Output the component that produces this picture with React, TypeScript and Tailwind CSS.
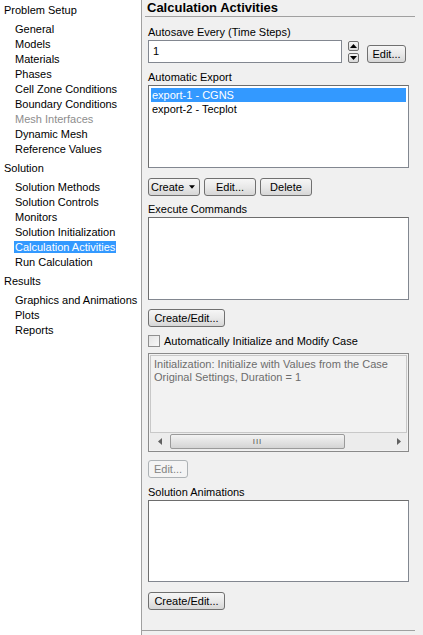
import React from 'react';

type TreeItem = { label: string; disabled?: boolean; selected?: boolean };
type TreeSection = { title: string; items: TreeItem[] };

const tree: TreeSection[] = [
  {
    title: 'Problem Setup',
    items: [
      { label: 'General' },
      { label: 'Models' },
      { label: 'Materials' },
      { label: 'Phases' },
      { label: 'Cell Zone Conditions' },
      { label: 'Boundary Conditions' },
      { label: 'Mesh Interfaces', disabled: true },
      { label: 'Dynamic Mesh' },
      { label: 'Reference Values' },
    ],
  },
  {
    title: 'Solution',
    items: [
      { label: 'Solution Methods' },
      { label: 'Solution Controls' },
      { label: 'Monitors' },
      { label: 'Solution Initialization' },
      { label: 'Calculation Activities', selected: true },
      { label: 'Run Calculation' },
    ],
  },
  {
    title: 'Results',
    items: [{ label: 'Graphics and Animations' }, { label: 'Plots' }, { label: 'Reports' }],
  },
];

function WinButton({
  children,
  disabled,
  className = '',
}: {
  children: React.ReactNode;
  disabled?: boolean;
  className?: string;
}) {
  return (
    <button
      type="button"
      className={`h-[18px] px-[4px] rounded-[3px] border text-[11px] leading-[14px] flex items-center justify-center ${
        disabled
          ? 'border-[#adb2b5] bg-[#f4f4f4] text-[#838383]'
          : 'border-[#707070] bg-gradient-to-b from-[#f6f6f6] via-[#e9e9e9] to-[#d6d6d6] text-black'
      } ${className}`}
    >
      {children}
    </button>
  );
}

function SpinButton({ up }: { up?: boolean }) {
  return (
    <div className="w-[11px] h-[10px] rounded-[2px] border border-[#707070] bg-gradient-to-b from-[#f4f4f4] to-[#d9d9d9] flex items-center justify-center">
      <svg width="7" height="4" viewBox="0 0 7 4">
        {up ? <path d="M0 4 L3.5 0 L7 4 Z" fill="#000" /> : <path d="M0 0 L3.5 4 L7 0 Z" fill="#000" />}
      </svg>
    </div>
  );
}

export default function App() {
  return (
    <div className="w-[423px] h-[635px] flex overflow-hidden font-['Liberation_Sans',Arial,sans-serif] text-[11px] text-black">
      {/* Navigation tree */}
      <div className="w-[142px] shrink-0 bg-white border-r border-[#a0a0a0] pt-[3px]">
        {tree.map((section, i) => (
          <div key={section.title} className={i > 0 ? 'mt-[4px]' : ''}>
            <div className="h-[15px] leading-[15px] pl-[4px]">{section.title}</div>
            <div className="mt-[4px]">
              {section.items.map((item) => (
                <div key={item.label} className="h-[15px] leading-[15px] pl-[14px]">
                  <span
                    className={`px-[1px] ${
                      item.selected ? 'bg-[#3399ff] text-white' : item.disabled ? 'text-[#8d8d8d]' : ''
                    }`}
                  >
                    {item.label}
                  </span>
                </div>
              ))}
            </div>
          </div>
        ))}
      </div>

      {/* Task page */}
      <div className="flex-1 bg-[#f0f0f0] flex flex-col">
        <div className="h-[17px] ml-[3px] w-[270px] border-b border-[#a0a0a0]">
          <div className="pl-[2px] text-[13px] font-bold leading-[15px]">Calculation Activities</div>
        </div>

        <div className="pl-[6px] flex flex-col">
          <div className="mt-[8px] h-[14px] leading-[14px]">Autosave Every (Time Steps)</div>
          <div className="mt-[1px] flex items-start">
            <div className="w-[194px] h-[23px] bg-white border border-[#828790] pl-[4px] pt-[3px] leading-[14px]">1</div>
            <div className="ml-[6px] mt-[1px] flex flex-col gap-[2px]">
              <SpinButton up />
              <SpinButton />
            </div>
            <WinButton className="ml-[8px] mt-[5px] w-[39px]">Edit...</WinButton>
          </div>

          <div className="mt-[7px] h-[14px] leading-[14px]">Automatic Export</div>
          <div className="mt-[1px] w-[261px] h-[83px] bg-white border border-[#828790] border-t-[#6d6d6d] border-l-[#6d6d6d] p-[2px]">
            <div className="h-[14px] leading-[14px] bg-[#3399ff] text-white pl-[1px]">export-1 - CGNS</div>
            <div className="h-[14px] leading-[14px] pl-[1px]">export-2 - Tecplot</div>
          </div>

          <div className="mt-[10px] flex gap-[4px]">
            <WinButton className="w-[52px] justify-start pl-[2px]">
              Create
              <svg className="ml-[5px]" width="7" height="4" viewBox="0 0 7 4">
                <path d="M0 0 L3.5 4 L7 0 Z" fill="#000" />
              </svg>
            </WinButton>
            <WinButton className="w-[52px]">Edit...</WinButton>
            <WinButton className="w-[52px]">Delete</WinButton>
          </div>

          <div className="mt-[6px] h-[14px] leading-[14px]">Execute Commands</div>
          <div className="mt-[1px] w-[261px] h-[83px] bg-white border border-[#828790] border-t-[#6d6d6d] border-l-[#6d6d6d]" />

          <WinButton className="mt-[9px] w-[77px]">Create/Edit...</WinButton>

          <div className="mt-[7px] h-[14px] flex items-center">
            <div className="w-[12px] h-[12px] border border-[#8f8f8f] bg-gradient-to-br from-[#e4e4e4] to-[#f8f8f8]" />
            <span className="ml-[4px] leading-[14px]">Automatically Initialize and Modify Case</span>
          </div>

          <div className="mt-[5px] w-[261px] h-[99px] border border-[#8a8a8a] bg-[#f2f2f2] p-[1px] flex flex-col">
            <div className="flex-1 border border-[#c8c8c8] px-[3px] pt-[2px] text-[#6d6d6d] leading-[13px]">
              <div>Initialization: Initialize with Values from the Case</div>
              <div>Original Settings, Duration = 1</div>
            </div>
            <div className="h-[17px] bg-[#ececec] flex items-center">
              <div className="w-[20px] flex justify-center">
                <svg width="4" height="7" viewBox="0 0 4 7">
                  <path d="M4 0 L0 3.5 L4 7 Z" fill="#606060" />
                </svg>
              </div>
              <div className="w-[175px] h-[15px] rounded-[2px] border border-[#9a9a9a] bg-gradient-to-b from-[#f3f3f3] to-[#d4d4d4] flex items-center justify-center">
                <span className="text-[8px] leading-[8px] text-[#555] tracking-[1px]">III</span>
              </div>
              <div className="flex-1" />
              <div className="w-[17px] flex justify-center">
                <svg width="4" height="7" viewBox="0 0 4 7">
                  <path d="M0 0 L4 3.5 L0 7 Z" fill="#606060" />
                </svg>
              </div>
            </div>
          </div>

          <WinButton disabled className="mt-[8px] w-[40px]">Edit...</WinButton>

          <div className="mt-[7px] h-[14px] leading-[14px]">Solution Animations</div>
          <div className="mt-[1px] w-[261px] h-[82px] bg-white border border-[#828790] border-t-[#6d6d6d] border-l-[#6d6d6d]" />

          <WinButton className="mt-[10px] w-[77px]">Create/Edit...</WinButton>
        </div>

        <div className="mt-[20px] w-[273px] border-t border-[#a0a0a0]" />
      </div>
    </div>
  );
}
